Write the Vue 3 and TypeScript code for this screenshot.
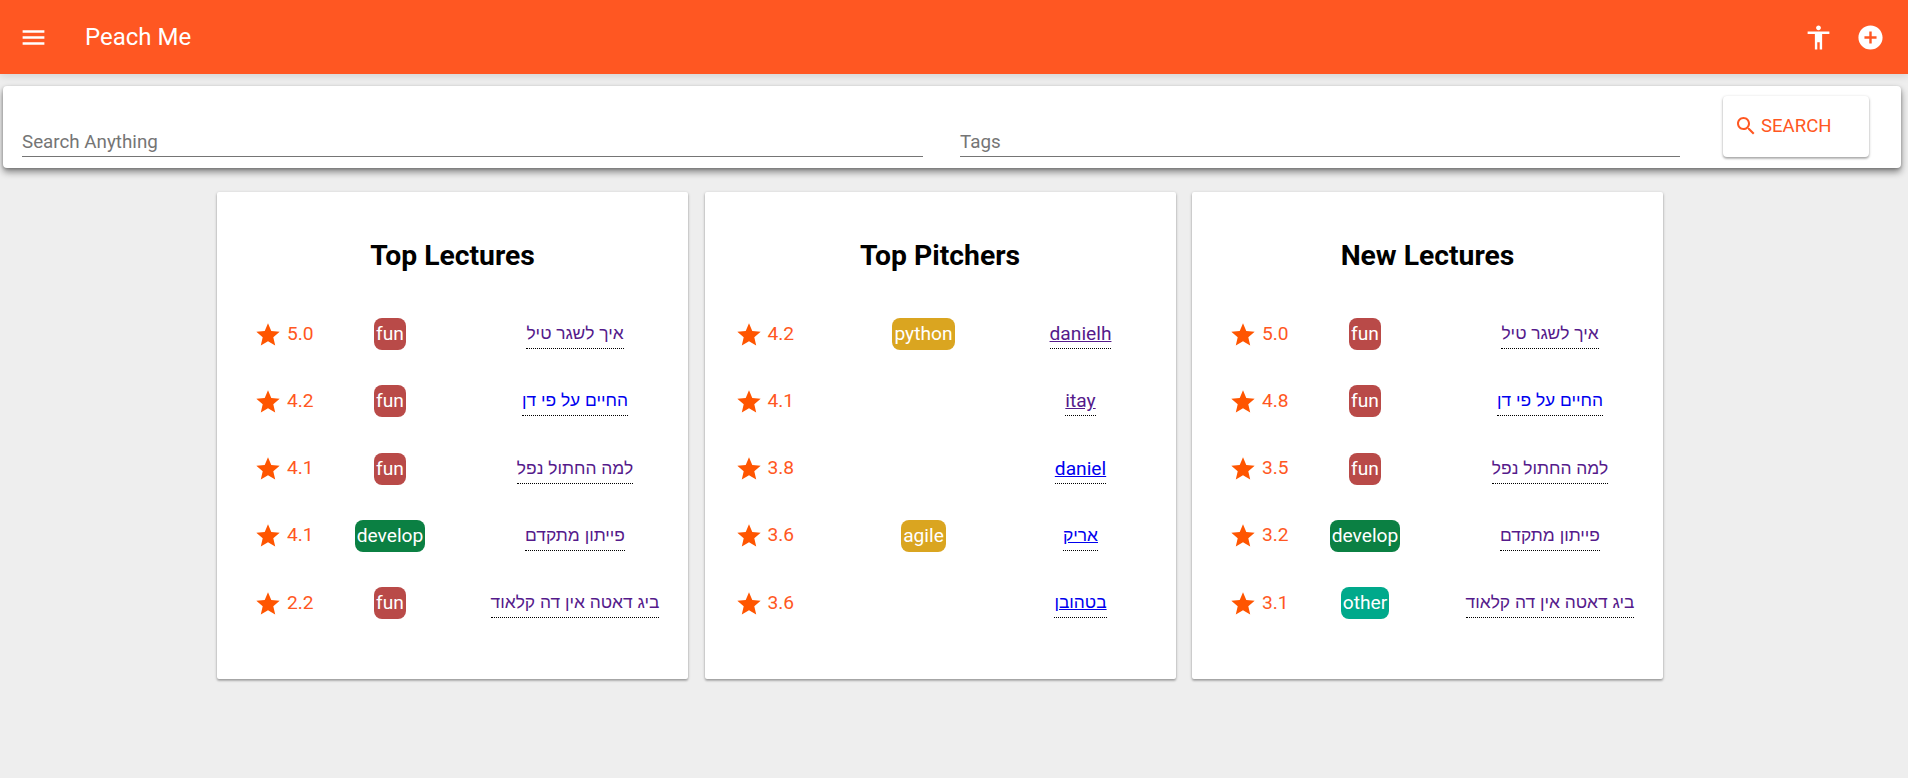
<script setup lang="ts">
interface Row {
  score: string
  tag?: string
  tagClass?: string
  label: string
  seen: boolean
  he?: boolean
}

interface Board {
  title: string
  kind: 'lectures' | 'pitchers'
  rows: Row[]
}

const boards: Board[] = [
  {
    title: 'Top Lectures',
    kind: 'lectures',
    rows: [
      { score: '5.0', tag: 'fun', tagClass: 'fun', label: 'איך לשגר טיל', seen: true, he: true },
      { score: '4.2', tag: 'fun', tagClass: 'fun', label: 'החיים על פי דן', seen: false, he: true },
      { score: '4.1', tag: 'fun', tagClass: 'fun', label: 'למה החתול נפל', seen: true, he: true },
      { score: '4.1', tag: 'develop', tagClass: 'develop', label: 'פייתון מתקדם', seen: true, he: true },
      { score: '2.2', tag: 'fun', tagClass: 'fun', label: 'ביג דאטה אין דה קלאוד', seen: true, he: true }
    ]
  },
  {
    title: 'Top Pitchers',
    kind: 'pitchers',
    rows: [
      { score: '4.2', tag: 'python', tagClass: 'gold', label: 'danielh', seen: true },
      { score: '4.1', label: 'itay', seen: true },
      { score: '3.8', label: 'daniel', seen: false },
      { score: '3.6', tag: 'agile', tagClass: 'gold', label: 'אריק', seen: false, he: true },
      { score: '3.6', label: 'בטהובן', seen: false, he: true }
    ]
  },
  {
    title: 'New Lectures',
    kind: 'lectures',
    rows: [
      { score: '5.0', tag: 'fun', tagClass: 'fun', label: 'איך לשגר טיל', seen: true, he: true },
      { score: '4.8', tag: 'fun', tagClass: 'fun', label: 'החיים על פי דן', seen: false, he: true },
      { score: '3.5', tag: 'fun', tagClass: 'fun', label: 'למה החתול נפל', seen: true, he: true },
      { score: '3.2', tag: 'develop', tagClass: 'develop', label: 'פייתון מתקדם', seen: true, he: true },
      { score: '3.1', tag: 'other', tagClass: 'other', label: 'ביג דאטה אין דה קלאוד', seen: true, he: true }
    ]
  }
]
</script>

<template>
  <div class="page">
    <header class="appbar">
      <svg class="icon menu" viewBox="0 0 24 24"><path d="M3 18h18v-2H3v2zm0-5h18v-2H3v2zm0-7v2h18V6H3z" /></svg>
      <span class="brand">Peach Me</span>
      <span class="spacer"></span>
      <svg class="icon access" viewBox="0 0 24 24"><path d="M12 2c1.1 0 2 .9 2 2s-.9 2-2 2-2-.9-2-2 .9-2 2-2zm9 7h-6v13h-2v-6h-2v6H9V9H3V7h18v2z" /></svg>
      <svg class="icon add" viewBox="0 0 24 24"><path d="M12 2C6.48 2 2 6.48 2 12s4.48 10 10 10 10-4.48 10-10S17.52 2 12 2zm5 11h-4v4h-2v-4H7v-2h4V7h2v4h4v2z" /></svg>
    </header>

    <section class="searchbar">
      <div class="field field-main">Search Anything</div>
      <div class="field field-tags">Tags</div>
      <button type="button" class="search-btn">
        <svg viewBox="0 0 24 24"><path d="M15.5 14h-.79l-.28-.27C15.41 12.59 16 11.11 16 9.5 16 5.91 13.09 3 9.5 3S3 5.91 3 9.5 5.91 16 9.5 16c1.61 0 3.09-.59 4.23-1.57l.27.28v.79l5 4.99L20.49 19l-4.99-5zm-6 0C7.01 14 5 11.99 5 9.5S7.01 5 9.5 5 14 7.01 14 9.5 11.99 14 9.5 14z" /></svg>
        <span>Search</span>
      </button>
    </section>

    <main class="cards">
      <article v-for="board in boards" :key="board.title" class="card">
        <h2 class="card-title">{{ board.title }}</h2>
        <div class="rows" :class="board.kind">
          <template v-for="row in board.rows" :key="row.label">
            <div class="rating">
              <svg viewBox="0 0 24 24"><path d="M12 17.27L18.18 21l-1.64-7.03L22 9.24l-7.19-.61L12 2 9.19 8.63 2 9.24l5.46 4.73L5.82 21z" /></svg>
              <span>{{ row.score }}</span>
            </div>
            <div class="tag-cell">
              <span v-if="row.tag" class="chip" :class="row.tagClass">{{ row.tag }}</span>
            </div>
            <div class="link-cell">
              <a class="link" :class="{ seen: row.seen, pitcher: board.kind === 'pitchers', he: row.he }" href="#">{{ row.label }}</a>
            </div>
          </template>
        </div>
      </article>
    </main>
  </div>
</template>

<style>
html,
body {
  margin: 0;
  background: #eeeeee;
}
</style>

<style scoped>
.page {
  height: 778px;
  overflow: hidden;
  background: #eeeeee;
  font-family: Roboto, "Liberation Sans", sans-serif;
  font-size: 19.2px;
}

.appbar {
  display: flex;
  align-items: center;
  height: 74px;
  background: #ff5722;
  color: #fff;
  box-shadow: 0 2px 8px rgba(0, 0, 0, 0.12);
}

.icon {
  display: block;
  width: 29px;
  height: 29px;
  fill: #fff;
}

.menu {
  margin-left: 19px;
}

.brand {
  margin-left: 37px;
  font-size: 24px;
  font-weight: 400;
}

.spacer {
  flex: 1;
}

.add {
  margin: 0 23px 0 23px;
}

.searchbar {
  display: flex;
  align-items: flex-end;
  height: 82px;
  margin: 12px 7px 0 3px;
  box-sizing: border-box;
  padding: 0 32px 11px 19px;
  background: #fff;
  border-radius: 4px;
  box-shadow: 0 4px 7px rgba(0, 0, 0, 0.45), 0 1px 3px rgba(0, 0, 0, 0.2);
}

.field {
  box-sizing: border-box;
  height: 32px;
  line-height: 35px;
  font-size: 18.8px;
  color: #757575;
  border-bottom: 1px solid #757575;
}

.field-main {
  width: 901px;
}

.field-tags {
  width: 720px;
  margin-left: 37px;
}

.search-btn {
  display: flex;
  align-items: center;
  gap: 3px;
  width: 146px;
  height: 61px;
  margin-left: 43px;
  padding: 0 0 2px 11px;
  border: none;
  border-radius: 4px;
  background: #fff;
  color: #ff5722;
  font: inherit;
  font-size: 18.6px;
  text-transform: uppercase;
  box-shadow: 0 1px 3px rgba(0, 0, 0, 0.3), 0 2px 2px rgba(0, 0, 0, 0.14);
}

.search-btn svg {
  width: 24px;
  height: 24px;
  fill: #ff5722;
}

.cards {
  display: flex;
  gap: 16.5px;
  padding: 24px 0 0 217px;
}

.card {
  width: 471px;
  height: 487px;
  background: #fff;
  border-radius: 2px;
  box-shadow: 0 1px 3px rgba(0, 0, 0, 0.3), 0 2px 2px rgba(0, 0, 0, 0.14);
}

.card-title {
  margin: 0;
  padding-top: 46px;
  height: 62.5px;
  line-height: 36px;
  text-align: center;
  font-size: 28.3px;
  font-weight: 700;
  color: #000;
}

.rows {
  display: grid;
  grid-auto-rows: 67.25px;
  align-items: center;
}

.rows.lectures {
  padding-left: 37px;
  grid-template-columns: 64px 144px 226px;
}

.rows.pitchers {
  padding-left: 30px;
  grid-template-columns: 127px 124px 190px;
}

.rating {
  display: flex;
  align-items: center;
  gap: 5px;
  color: #ff5722;
}

.rating svg {
  flex: none;
  width: 28px;
  height: 28px;
  margin-top: 1px;
  fill: #ff5500;
}

.rating span {
  margin-top: -2px;
}

.tag-cell,
.link-cell {
  display: flex;
  justify-content: center;
}

.chip {
  box-sizing: border-box;
  height: 32px;
  line-height: 32px;
  padding: 0 2px;
  border-radius: 8px;
  color: #fff;
  font-weight: 400;
}

.fun {
  background: #b94a48;
}

.develop {
  background: #0b8043;
}

.gold {
  background: #daa520;
}

.other {
  background: #00a98b;
}

.link {
  display: block;
  color: #0000ee;
  text-decoration: none;
  line-height: 29px;
  border-bottom: 1px dotted #000;
}

.link.he {
  font-family: "Liberation Sans", Roboto, sans-serif;
  font-size: 17.4px;
}

.link.seen {
  color: #551a8b;
}

.link.pitcher {
  text-decoration: underline;
}
</style>
